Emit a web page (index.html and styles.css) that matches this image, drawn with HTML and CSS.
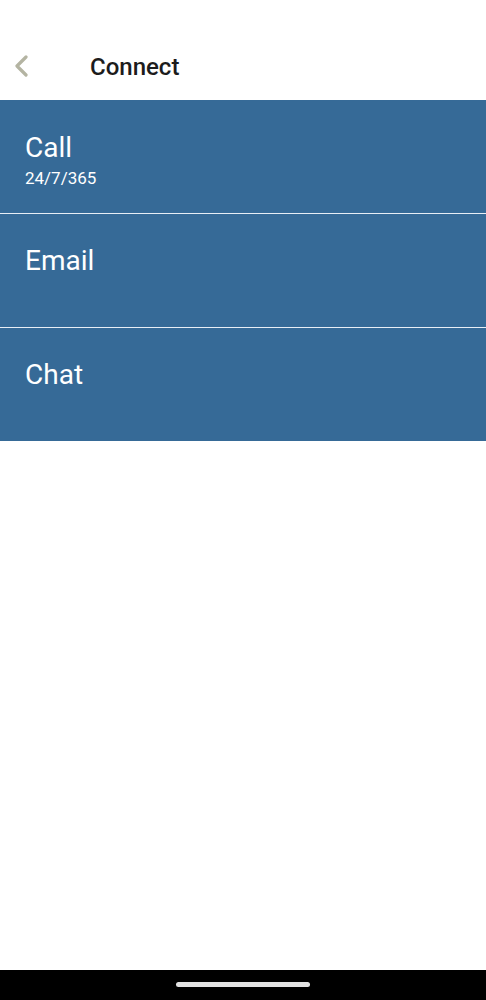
FILE: index.html
```html
<!DOCTYPE html>
<html lang="en">
<head>
  <meta charset="UTF-8">
  <title>Connect</title>
  <link rel="stylesheet" href="styles.css">
</head>
<body>

  <div class="screen">
    <header class="topbar">
      <button class="back" aria-label="Back">
        <svg width="16" height="22" viewBox="0 0 16 22">
          <polyline points="13,2 4,11 13,20" fill="none" stroke="#b4b4a2" stroke-width="3.2" stroke-linecap="round" stroke-linejoin="round"/>
        </svg>
      </button>
      <h1>Connect</h1>
    </header>

    <ul class="options">
      <li class="option">
        <span class="option-title">Call</span>
        <span class="option-sub">24/7/365</span>
      </li>
      <li class="option">
        <span class="option-title">Email</span>
      </li>
      <li class="option">
        <span class="option-title">Chat</span>
      </li>
    </ul>

    <div class="spacer"></div>

    <div class="navbar">
      <div class="home-pill"></div>
    </div>
  </div>

</body>
</html>
```

FILE: styles.css
```css
body {
  margin: 0;
  font-family: Roboto, "Noto Sans", sans-serif;
  background-color: #fff;
}
.screen {
  display: flex;
  flex-direction: column;
  min-height: 100vh;
}
.topbar {
  height: 100px;
  display: flex;
  align-items: flex-end;
  padding: 0 0 19px 13px;
  box-sizing: border-box;
}
.back {
  background: none;
  border: none;
  padding: 0;
  width: 16px;
  height: 22px;
  margin-bottom: 4px;
  cursor: pointer;
}
.back svg {
  display: block;
}
.topbar h1 {
  margin: 0 0 0 61px;
  font-size: 24px;
  font-weight: 500;
  color: #1c1c1c;
  line-height: 28px;
}
.options {
  list-style: none;
  margin: 0;
  padding: 0;
  background-color: #366a97;
}
.option {
  height: 114px;
  box-sizing: border-box;
  padding: 30px 25px 0;
  display: flex;
  flex-direction: column;
  color: #fff;
  border-top: 1px solid #e8eef5;
}
.option:first-child {
  height: 113px;
  padding-top: 31px;
  border-top: none;
}
.option-title {
  font-size: 28px;
  line-height: 34px;
}
.option-sub {
  font-size: 17px;
  line-height: 20px;
  margin-top: 3px;
}
.spacer {
  flex: 1;
}
.navbar {
  height: 30px;
  background-color: #000;
  display: flex;
  justify-content: center;
  align-items: center;
}
.home-pill {
  width: 134px;
  height: 5px;
  border-radius: 3px;
  background-color: #e2e2e2;
  margin-top: -2px;
}
```
